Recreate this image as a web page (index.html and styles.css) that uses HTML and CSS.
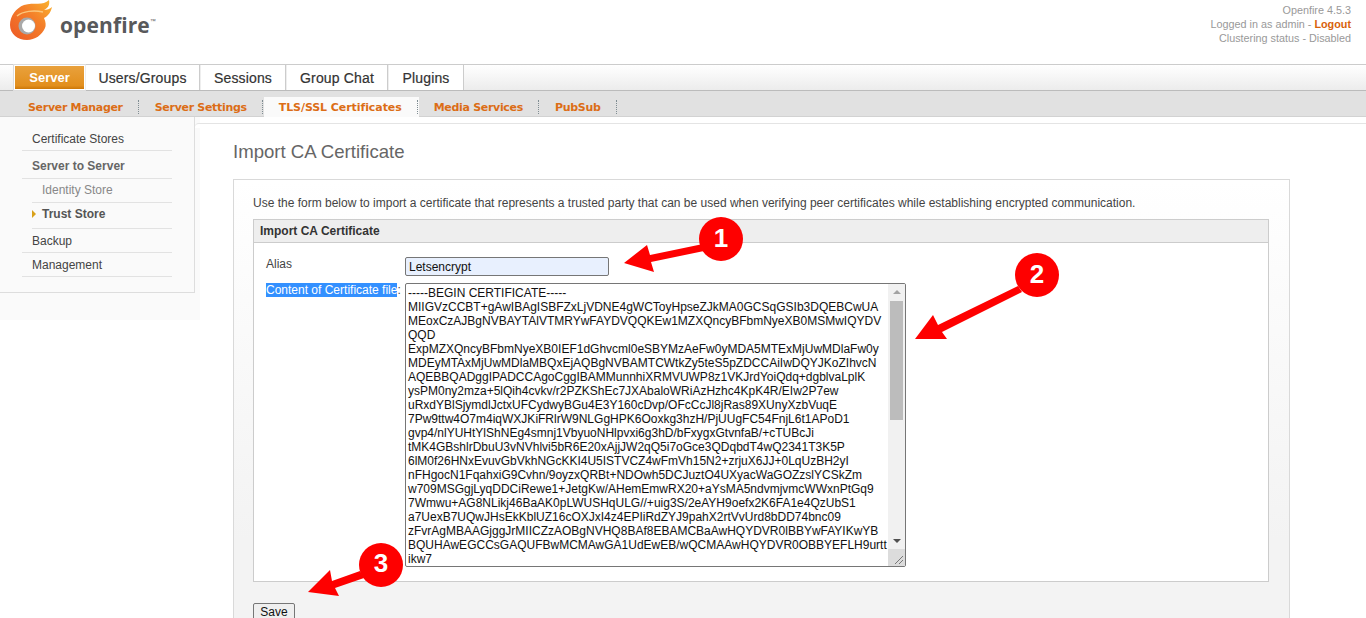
FILE: index.html
```html
<!DOCTYPE html>
<html lang="en">
<head>
<meta charset="utf-8">
<title>Openfire Admin Console: Import CA Certificate</title>
<link rel="stylesheet" href="styles.css">
</head>
<body>
<header class="masthead">
  <div class="brand">
    <svg class="flame" width="43" height="41" viewBox="0 0 43 41" aria-hidden="true">
      <defs>
        <linearGradient id="fl" x1="0.1" y1="0.9" x2="0.95" y2="0.05">
          <stop offset="0" stop-color="#ee5f26"/>
          <stop offset="0.55" stop-color="#f47f2a"/>
          <stop offset="1" stop-color="#fab02e"/>
        </linearGradient>
      </defs>
      <path fill="url(#fl)" d="M0 25C0 16 6 8 14 5C24 2 33 6 39 0C40 5 38 8 34 10C37 10 40 9 42 7C41 12 38 16 34 18C36 22 36 26 35 28C32 35 25 40 17 40C8 40 0 34 0 25Z"/>
      <path fill="none" stroke="#fbc77d" stroke-width="1.5" d="M7 16C13 11 24 10 33 12"/>
      <circle cx="17" cy="26" r="8.5" fill="#a9a9a9"/>
      <circle cx="18.5" cy="26" r="6.5" fill="#fff"/>
    </svg>
    <span class="wordmark">openfire</span><span class="tm">™</span>
  </div>
  <div class="info">
    <div>Openfire 4.5.3</div>
    <div>Logged in as admin - <a class="logout" href="#">Logout</a></div>
    <div>Clustering status - Disabled</div>
  </div>
</header>

<nav class="tabs">
  <a class="tab tab-on" href="#">Server</a>
  <a class="tab tab-users" href="#">Users/Groups</a>
  <a class="tab tab-sessions" href="#">Sessions</a>
  <a class="tab tab-chat" href="#">Group Chat</a>
  <a class="tab tab-plugins" href="#">Plugins</a>
</nav>

<nav class="subtabs">
  <a class="sub" href="#">Server Manager</a>
  <a class="sub" href="#">Server Settings</a>
  <a class="sub sub-on" href="#">TLS/SSL Certificates</a>
  <a class="sub" href="#">Media Services</a>
  <a class="sub" href="#">PubSub</a>
</nav>

<div class="main">
  <aside class="side">
    <ul class="menu">
      <li class="m-item"><a href="#">Certificate Stores</a></li>
      <li class="m-item m-head"><a href="#">Server to Server</a></li>
      <li class="m-item m-child"><a href="#">Identity Store</a></li>
      <li class="m-item m-child m-cur"><a href="#">Trust Store</a></li>
      <li class="m-item"><a href="#">Backup</a></li>
      <li class="m-item"><a href="#">Management</a></li>
    </ul>
  </aside>

  <main class="content">
    <h1 class="title">Import CA Certificate</h1>
    <section class="box">
      <p class="intro">Use the form below to import a certificate that represents a trusted party that can be used when verifying peer certificates while establishing encrypted communication.</p>
      <div class="panel">
        <div class="panel-head">Import CA Certificate</div>
        <div class="panel-body">
          <div class="f-labels">
            <label class="lbl-alias" for="alias">Alias</label>
            <div class="lbl-cert"><span class="sel">Content of Certificate file</span>:</div>
          </div>
          <div class="f-fields">
            <input class="alias" id="alias" type="text" value="Letsencrypt">
            <div class="ta">
              <div class="ta-text">-----BEGIN CERTIFICATE-----
MIIGVzCCBT+gAwIBAgISBFZxLjVDNE4gWCToyHpseZJkMA0GCSqGSIb3DQEBCwUA
MEoxCzAJBgNVBAYTAlVTMRYwFAYDVQQKEw1MZXQncyBFbmNyeXB0MSMwIQYDV
QQD
ExpMZXQncyBFbmNyeXB0IEF1dGhvcml0eSBYMzAeFw0yMDA5MTExMjUwMDlaFw0y
MDEyMTAxMjUwMDlaMBQxEjAQBgNVBAMTCWtkZy5teS5pZDCCAiIwDQYJKoZIhvcN
AQEBBQADggIPADCCAgoCggIBAMMunnhiXRMVUWP8z1VKJrdYoiQdq+dgblvaLplK
ysPM0ny2mza+5lQih4cvkv/r2PZKShEc7JXAbaloWRiAzHzhc4KpK4R/EIw2P7ew
uRxdYBlSjymdlJctxUFCydwyBGu4E3Y160cDvp/OFcCcJl8jRas89XUnyXzbVuqE
7Pw9ttw4O7m4iqWXJKiFRlrW9NLGgHPK6Ooxkg3hzH/PjUUgFC54FnjL6t1APoD1
gvp4/nlYUHtYlShNEg4smnj1VbyuoNHlpvxi6g3hD/bFxygxGtvnfaB/+cTUBcJi
tMK4GBshlrDbuU3vNVhlvi5bR6E20xAjjJW2qQ5i7oGce3QDqbdT4wQ2341T3K5P
6lM0f26HNxEvuvGbVkhNGcKKI4U5ISTVCZ4wFmVh15N2+zrjuX6JJ+0LqUzBH2yI
nFHgocN1FqahxiG9Cvhn/9oyzxQRBt+NDOwh5DCJuztO4UXyacWaGOZzslYCSkZm
w709MSGgjLyqDDCiRewe1+JetgKw/AHemEmwRX20+aYsMA5ndvmjvmcWWxnPtGq9
7Wmwu+AG8NLikj46BaAK0pLWUSHqULG//+uig3S/2eAYH9oefx2K6FA1e4QzUbS1
a7UexB7UQwJHsEkKblUZ16cOXJxI4z4EPIiRdZYJ9pahX2rtVvUrd8bDD74bnc09
zFvrAgMBAAGjggJrMIICZzAOBgNVHQ8BAf8EBAMCBaAwHQYDVR0lBBYwFAYIKwYB
BQUHAwEGCCsGAQUFBwMCMAwGA1UdEwEB/wQCMAAwHQYDVR0OBBYEFLH9urtt
ikw7</div>
              <div class="sb">
                <span class="sb-up"></span>
                <div class="sb-track"><div class="sb-thumb"></div></div>
                <span class="sb-down"></span>
                <svg class="grip" width="17" height="17" viewBox="0 0 17 17" aria-hidden="true">
                  <path d="M15 7L7 15M15 11L11 15" stroke="#777" stroke-width="1" fill="none"/>
                </svg>
              </div>
            </div>
          </div>
        </div>
      </div>
      <button class="save" type="button">Save</button>
    </section>
  </main>
</div>

<svg class="notes" width="1366" height="618" viewBox="0 0 1366 618" aria-hidden="true">
  <g fill="#fe0000">
    <path d="M624 263L647 245L650 255L703 244L704 251L651 262L654 272Z"/>
    <circle cx="721" cy="239" r="22"/>
    <path d="M915 339L933 315L938 325L1018 286L1022 292L942 332L947 339Z"/>
    <circle cx="1037" cy="275" r="22"/>
    <path d="M308 592L330 570L332 581L360 571L364 578L335 588L339 596Z"/>
    <circle cx="381" cy="565" r="22"/>
  </g>
  <g class="num">
    <text x="721" y="247">1</text>
    <text x="1037" y="283">2</text>
    <text x="381" y="572">3</text>
  </g>
</svg>
</body>
</html>
```
FILE: styles.css
```css
* { box-sizing: border-box; }
html, body { margin: 0; padding: 0; height: 618px; overflow: hidden; background: #fff; }
body { font-family: "Liberation Sans", Arial, sans-serif; font-size: 12px; color: #333; position: relative; }
a { text-decoration: none; color: inherit; }

.masthead { height: 64px; display: flex; justify-content: space-between; }
.brand { display: flex; align-items: flex-start; padding-left: 10px; }
.flame { display: block; }
.wordmark { font-family: "Open Sans", sans-serif; font-weight: 700; font-size: 21px; letter-spacing: 0.1px; line-height: 30px; color: #58595b; margin: 10px 0 0 7px; }
.tm { font-size: 6px; line-height: 8px; margin-top: 17px; color: #58595b; }
.info { padding: 3px 15px 0 0; text-align: right; font-size: 10.8px; line-height: 14px; color: #999; }
.logout { color: #d8610a; font-weight: bold; }

.tabs { height: 27px; display: flex; align-items: flex-end; padding-left: 14px; border-top: 1px solid #ccc; border-bottom: 1px solid #bbb; background: linear-gradient(#fff, #ececec); }
.tab { height: 25px; display: flex; align-items: center; justify-content: center; font-size: 14px; letter-spacing: 0.15px; color: #333; background: #fff; border-right: 1px solid #ccc; border-left: 1px solid #eee; -webkit-text-stroke: 0.2px #333; }
.tab-on { width: 71px; height: 25px; background: linear-gradient(#e9a13c, #e28f1e 85%, #cc7708); color: #fff; font-weight: bold; font-size: 13px; letter-spacing: 0; border: 1px solid #fff; outline: 1px solid #ddd; -webkit-text-stroke: 0; }
.tab-users { width: 115px; }
.tab-sessions { width: 86px; }
.tab-chat { width: 102px; }
.tab-plugins { width: 76px; }

.subtabs { height: 26px; display: flex; align-items: flex-end; padding-left: 13px; background: #e1e1e1; border-bottom: 1px solid #d2d2d2; }
.sub { height: 20px; padding-left: 15px; margin-bottom: -1px; display: flex; align-items: center; font-family: "DejaVu Sans", sans-serif; font-weight: bold; font-size: 11px; letter-spacing: -0.31px; color: #dc6d16; }
.sub::after { content: ""; width: 1px; height: 14px; margin-left: 15px; border-left: 1px dotted #7f8c92; }
.sub-on { background: #fafafa; letter-spacing: -0.07px; position: relative; }

.main { display: flex; align-items: flex-start; height: 501px; }
.side { width: 200px; height: 203px; background: #fafafa; flex: none; }
.menu { list-style: none; margin: 0; padding: 10px 22px 0 22px; width: 195px; height: 176px; background: #fafafa; border-right: 1px solid #ddd; border-bottom: 1px solid #ddd; }
.m-item { height: 24px; border-bottom: 1px solid #e2e2e2; padding: 1px 0 0 10px; line-height: 23px; font-size: 12px; color: #444; }
.m-head { height: 28px; padding-top: 2px; line-height: 27px; font-weight: bold; color: #666; }
.m-child { margin-left: 10px; color: #888; line-height: 21px; }
.m-cur { height: 26px; font-weight: bold; color: #555; position: relative; }
.m-cur::before { content: ""; position: absolute; left: 0; top: 7px; border-left: 4px solid #d9a11a; border-top: 4px solid transparent; border-bottom: 4px solid transparent; }

.content { flex: 1; padding: 16px 76px 0 38px; background: linear-gradient(#fafafa, #fafafa) no-repeat 0 4px / 5px 192px, #fff; border-radius: 4px 0 0 0; height: 495px; margin-left: -5px; margin-top: 6px; border-top: 1px solid #e4e4e4; }
.title { margin: 0 0 15px; font-weight: normal; font-size: 18.6px; line-height: 24px; color: #666; }
.box { border: 1px solid #d9d9d9; border-bottom: 0; padding: 0 20px 0 19px; height: 439px; overflow: hidden; background: linear-gradient(#fff, #f3f3f3 360px); }
.intro { margin: 0; padding-top: 16px; height: 39px; line-height: 14px; color: #444; white-space: nowrap; }
.panel { border: 1px solid #ccc; background: #fff; height: 363px; }
.panel-head { height: 23px; line-height: 23px; padding-left: 6px; font-weight: bold; color: #333; background: #eee; border-bottom: 1px solid #ccc; }
.panel-body { display: flex; padding-top: 14px; }
.f-labels { width: 151px; padding-left: 12px; flex: none; }
.lbl-alias { display: block; height: 26px; line-height: 14px; color: #444; }
.lbl-cert { line-height: 14px; color: #444; white-space: nowrap; }
.sel { background: #3390ff; color: #fff; }
.f-fields { display: flex; flex-direction: column; }
.alias { width: 204px; height: 19px; padding: 1px 3px 0; margin: 0 0 7px; border: 1px solid #767676; border-radius: 2px; background: #e8f0fe; font: 12px "Liberation Sans", sans-serif; color: #111; outline: 0; }
.ta { width: 501px; height: 284px; border: 1px solid #767676; border-radius: 2px; display: flex; background: #fff; overflow: hidden; }
.ta-text { flex: 1; padding: 2px 0 0 2px; font-size: 12px; line-height: 14px; color: #111; white-space: pre; overflow: hidden; }
.sb { width: 17px; flex: none; background: #f1f1f1; display: flex; flex-direction: column; align-items: center; }
.sb-up, .sb-down { width: 17px; height: 17px; flex: none; position: relative; }
.sb-up::before { content: ""; position: absolute; left: 5px; top: 6px; border-left: 4px solid transparent; border-right: 4px solid transparent; border-bottom: 4px solid #a3a3a3; }
.sb-down::before { content: ""; position: absolute; left: 5px; top: 7px; border-left: 4px solid transparent; border-right: 4px solid transparent; border-top: 4px solid #505050; }
.sb-track { flex: 1; width: 13px; }
.sb-thumb { height: 119px; background: #bcbcbc; }
.grip { display: block; flex: none; background: #dcdcdc; }
.save { display: block; margin-top: 21px; width: 42px; height: 18px; padding: 0; background: #efefef; border: 1px solid #767676; border-radius: 2px; font: 12px/12px "Liberation Sans", sans-serif; color: #111; }

.notes { position: absolute; left: 0; top: 0; pointer-events: none; }
.num text { font-family: "Liberation Sans", sans-serif; font-weight: bold; font-size: 26px; fill: #fff; text-anchor: middle; }
```
